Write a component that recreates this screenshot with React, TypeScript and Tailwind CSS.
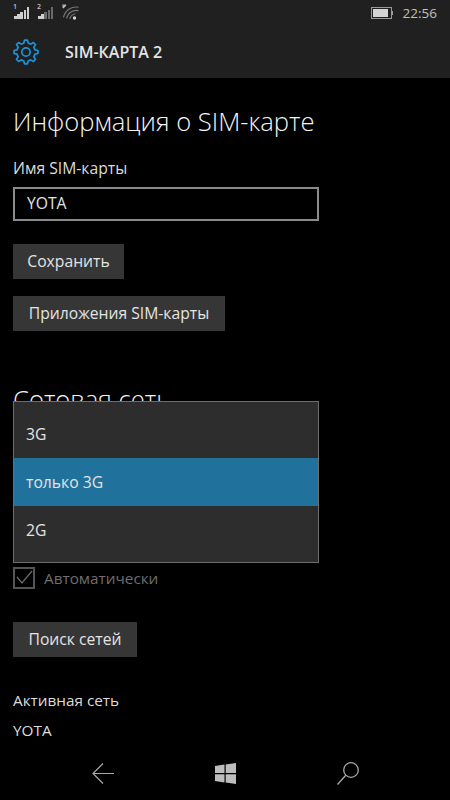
const font = { fontFamily: '"Open Sans", "Noto Sans", sans-serif' };

function SignalBars({ label, lit }: { label: string; lit: number }) {
  const heights = [3, 5, 7, 9, 12];
  return (
    <div className="relative flex h-[12px] w-[16px] items-end gap-[0.6px]">
      <span className="absolute left-[-1px] top-[-4px] text-[7px] font-semibold leading-none text-[#c4c4c4]">{label}</span>
      {heights.map((h, i) => (
        <div
          key={i}
          className={i >= lit ? 'w-[2.6px] bg-[#6a6a6a]' : 'w-[2.6px] bg-[#cfcfcf]'}
          style={{ height: h }}
        />
      ))}
    </div>
  );
}

function WifiIcon() {
  return (
    <svg width="18" height="16" viewBox="0 0 18 16" fill="none" stroke="#787878" strokeWidth="1.1">
      <path d="M1 4 L4 1 M1 3.4 V1 H3.4" stroke="#c4c4c4" />
      <path d="M1.5 13.5 A 13 13 0 0 1 16.5 3.2" />
      <path d="M4.6 14.5 A 10 10 0 0 1 16.5 6.6" />
      <path d="M7.8 15 A 7 7 0 0 1 13.5 9.8" />
      <circle cx="12.5" cy="14" r="1.7" fill="#d4d4d4" stroke="none" />
    </svg>
  );
}

// eight-tooth cog, worked out around the centre of a 26 unit box
function gearPath() {
  const pts: string[] = [];
  const teeth = 8;
  for (let i = 0; i < teeth; i++) {
    const a = (i * Math.PI * 2) / teeth - Math.PI / 2;
    const step = (Math.PI * 2) / teeth;
    const corners: [number, number][] = [
      [9.2, a - step * 0.3],
      [12, a - step * 0.16],
      [12, a + step * 0.16],
      [9.2, a + step * 0.3],
    ];
    corners.forEach(([r, t]) => {
      pts.push(`${(13 + r * Math.cos(t)).toFixed(2)} ${(13 + r * Math.sin(t)).toFixed(2)}`);
    });
  }
  return 'M' + pts.join(' L') + ' Z';
}

function GearIcon() {
  return (
    <svg width="26" height="26" viewBox="0 0 26 26" fill="none" stroke="#1b93dc" strokeWidth="1.7" strokeLinejoin="round">
      <path d={gearPath()} />
      <circle cx="13" cy="13" r="4.2" />
    </svg>
  );
}

function BatteryIcon() {
  return (
    <div className="flex items-center">
      <div className="flex h-[12px] w-[21px] items-stretch border border-[#9a9a9a] p-px">
        <div className="w-[15px] bg-[#d4d4d4]" />
      </div>
      <div className="h-[4px] w-[1px] bg-[#9a9a9a]" />
    </div>
  );
}

function WindowsLogo() {
  return (
    <svg width="21" height="21" viewBox="0 0 21 21" fill="#bdbdbd">
      <path d="M0 3 L9.5 1.6 V10 H0 Z" />
      <path d="M10.7 1.4 L21 0 V10 H10.7 Z" />
      <path d="M0 11.2 H9.5 V19.4 L0 18 Z" />
      <path d="M10.7 11.2 H21 V21 L10.7 19.6 Z" />
    </svg>
  );
}

function BackArrow() {
  return (
    <svg width="22" height="21" viewBox="0 0 22 21" fill="none" stroke="#a8a8a8" strokeWidth="1.2">
      <path d="M22 10.5 H1 M11 0.5 L1 10.5 L11 20.5" />
    </svg>
  );
}

function SearchIcon() {
  return (
    <svg width="22" height="23" viewBox="0 0 22 23" fill="none" stroke="#a8a8a8" strokeWidth="1.3">
      <circle cx="14" cy="8" r="7.3" />
      <path d="M0.5 22.5 L8.8 13.2" />
    </svg>
  );
}

export default function App() {
  return (
    <div className="flex h-[800px] w-[450px] flex-col overflow-hidden bg-black" style={font}>
      <header className="h-[78px] shrink-0 bg-[#202020]">
        <div className="flex h-[30px] justify-between pl-[14px] pr-[13px]">
          <div className="flex items-start gap-[8px] pt-[7px]">
            <SignalBars label="1" lit={5} />
            <SignalBars label="2" lit={2} />
            <div className="mt-[-3px]">
              <WifiIcon />
            </div>
          </div>
          <div className="flex items-start gap-[10px] pt-[4px]">
            <div className="pt-[3px]">
              <BatteryIcon />
            </div>
            <span className="text-[13.5px] leading-[18px] text-[#c0c0c0]">22:56</span>
          </div>
        </div>
        <div className="flex items-center gap-[26px] pl-[13px] pt-[9px]">
          <GearIcon />
          <span className="text-[16px] font-semibold leading-[26px] text-[#e4e4e4]">SIM-КАРТА 2</span>
        </div>
      </header>

      <main className="relative flex flex-1 flex-col overflow-hidden px-[13px] pt-[28px]">
        <h1 className="text-[25.6px] font-light leading-[32px] text-[#f4f4f4]">Информация о SIM-карте</h1>
        <label className="mt-[20px] text-[15.7px] leading-[20px] text-[#dcdcdc]">Имя SIM-карты</label>
        <div className="mt-[9px] flex h-[34px] w-[306px] items-center border-2 border-[#8a8a8a] px-[12px] text-[15.7px] text-[#e4e4e4]">
          YOTA
        </div>
        <button className="mt-[23px] h-[35px] w-[111px] bg-[#363636] text-[15.7px] text-[#e4e4e4]">Сохранить</button>
        <button className="mt-[17px] h-[35px] w-[212px] bg-[#363636] text-[15.7px] text-[#e4e4e4]">Приложения SIM-карты</button>
        <h2 className="mt-[53px] text-[25.6px] font-light leading-[32px] text-[#f4f4f4]">Сотовая сеть</h2>
        <div className="mt-[151px] flex h-[22px] items-center gap-[9px]">
          <div className="flex h-[22px] w-[22px] items-center justify-center border-2 border-[#555555]">
            <svg width="18" height="18" viewBox="0 0 18 18" fill="none" stroke="#6a6a6a" strokeWidth="1.3">
              <path d="M2 8 L7 14 L17 2" />
            </svg>
          </div>
          <span className="text-[15.3px] text-[#6e6e6e]">Автоматически</span>
        </div>
        <button className="mt-[33px] h-[35px] w-[124px] bg-[#363636] text-[15.7px] text-[#e4e4e4]">Поиск сетей</button>
        <div className="mt-[33px] text-[15.3px] leading-[20px] text-[#dcdcdc]">Активная сеть</div>
        <div className="mt-[10px] text-[15.3px] leading-[20px] text-[#dcdcdc]">YOTA</div>

        <ul className="absolute left-[13px] top-[323px] w-[306px] border border-[#6e6e6e] bg-[#2d2d2d] text-[15.7px] text-[#e4e4e4]">
          <li className="flex h-[56px] items-center px-[12px] pt-[10px]">3G</li>
          <li className="flex h-[48px] items-center bg-[#20719c] px-[12px] pt-[2px]">только 3G</li>
          <li className="flex h-[56px] items-center px-[12px] pb-[6px]">2G</li>
        </ul>
      </main>

      <nav className="flex h-[50px] shrink-0 items-center justify-between bg-black pb-[4px] pl-[92px] pr-[91px]">
        <BackArrow />
        <WindowsLogo />
        <SearchIcon />
      </nav>
    </div>
  );
}
